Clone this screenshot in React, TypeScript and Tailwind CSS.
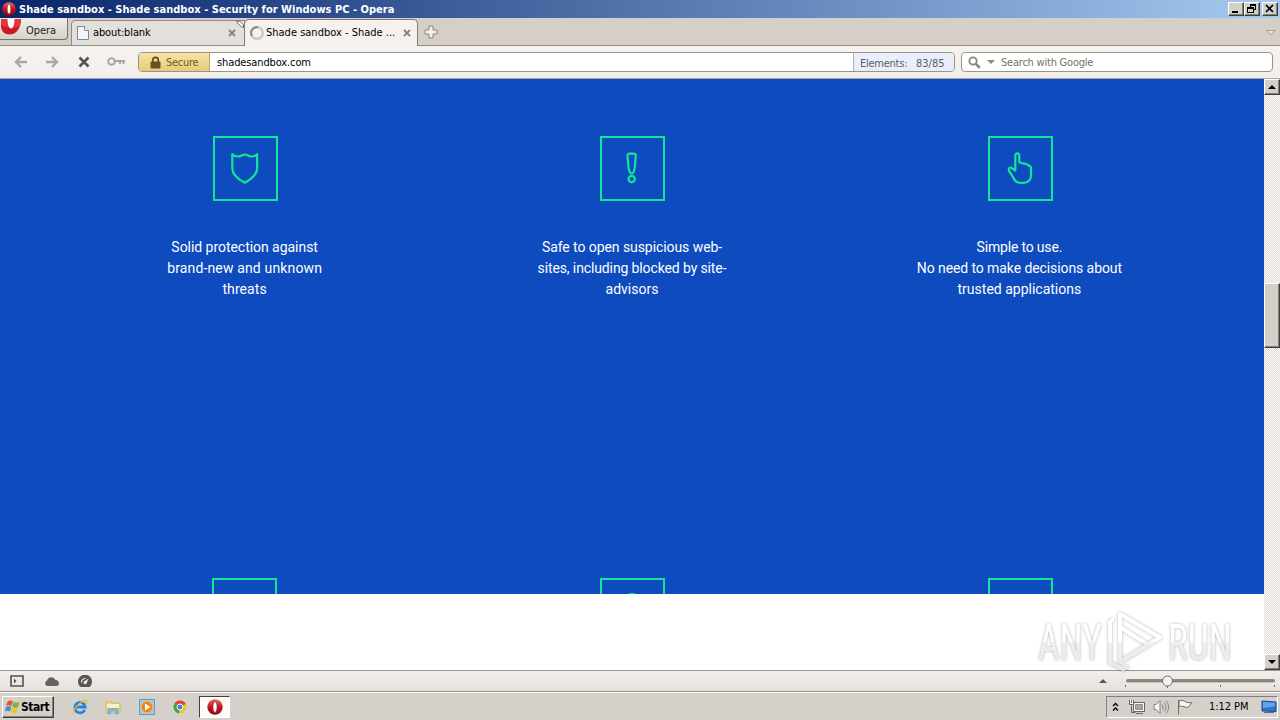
import type { ReactNode } from "react";
import clsx from "clsx";

const uiFont = "font-['DejaVu_Sans_Condensed','DejaVu_Sans',sans-serif] font-stretch-condensed";

const bevel =
  "bg-[#d4d0c8] border border-t-white border-l-white border-r-[#404040] border-b-[#404040] shadow-[inset_-1px_-1px_0_#808080]";

function OperaLogo({ className }: { className?: string }) {
  return (
    <svg viewBox="0 0 16 16" className={className}>
      <defs>
        <linearGradient id="operaRed" x1="0" y1="0" x2="0" y2="1">
          <stop offset="0" stopColor="#ee6a62" />
          <stop offset="0.5" stopColor="#c8141c" />
          <stop offset="1" stopColor="#8e0810" />
        </linearGradient>
      </defs>
      <ellipse cx="8" cy="8" rx="7.7" ry="7.8" fill="url(#operaRed)" />
      <ellipse cx="8" cy="8" rx="2.1" ry="5.5" fill="#fff" stroke="#7c0910" strokeWidth="0.6" />
    </svg>
  );
}

function ShieldIcon() {
  return (
    <path d="M19.300 18.200c2.300 2.300 4.700 2.600 7.200 2.100 2.300-.4 3.300-1.800 5.300-1.800s3 1.400 5.300 1.800c2.500.5 4.900.2 7-2.100v14.300c0 6.500-5.500 10.500-12.300 14.300-7-3.800-12.500-7.800-12.500-14.300z" />
  );
}

function WarningIcon() {
  return (
    <>
      <path d="M29.500 17.700h4.400c1.300 0 2 .8 1.900 2l-1 11.500c-.3 2.500-1.200 6.300-3.100 6.300s-2.900-3.800-3.200-6.300l-1-11.500c-.1-1.200.7-2 2-2z" />
      <circle cx="31.700" cy="43" r="3.200" />
    </>
  );
}

function HandIcon() {
  return (
    <path d="M27.300 34.500V20c0-3.400 4-3.400 4 0v6.500c2 .2 3 .4 4.500 1.200 2.500.1 3.500.6 4.500 1.600 2 .2 2.700 1.300 2.700 3v7c0 4.500-3 7.500-7.500 7.500h-3.500c-3.800 0-5.500-2.300-6.800-5.300l-3.900-6.200c-1.500-3.500 1-4.500 3-2.800z" />
  );
}

function IconBox({ children }: { children?: ReactNode }) {
  return (
    <div className="h-[65px] w-[65px] shrink-0 border-2 border-[#12e696]">
      <svg viewBox="2 2 61 61" className="h-full w-full" fill="none" stroke="#12e696" strokeWidth="2.200" strokeLinejoin="round">
        {children}
      </svg>
    </div>
  );
}

const features = [
  {
    icon: <ShieldIcon />,
    lines: [
      { text: "Solid protection against", tracking: "tracking-[-0.04px]" },
      { text: "brand-new and unknown", tracking: "tracking-[0.15px]" },
      { text: "threats", tracking: "tracking-[0.1px]" },
    ],
  },
  {
    icon: <WarningIcon />,
    lines: [
      { text: "Safe to open suspicious web-", tracking: "tracking-[-0.07px]" },
      { text: "sites, including blocked by site-", tracking: "tracking-[-0.12px]" },
      { text: "advisors", tracking: "tracking-normal" },
    ],
  },
  {
    icon: <HandIcon />,
    lines: [
      { text: "Simple to use.", tracking: "tracking-[-0.18px]" },
      { text: "No need to make decisions about", tracking: "tracking-[-0.09px]" },
      { text: "trusted applications", tracking: "tracking-normal" },
    ],
  },
];

function TitleBar() {
  return (
    <header className="flex h-[18px] items-center bg-linear-to-r from-[#0a246a] to-[#a6caf0] pl-[2px] pr-[2px]">
      <OperaLogo className="h-[14px] w-[14px]" />
      <h1 className="ml-[3px] flex-1 whitespace-nowrap text-[11px] font-bold leading-none tracking-[0.020px] text-white">
        Shade sandbox - Shade sandbox - Security for Windows PC - Opera
      </h1>
      <div className="flex">
        <button className={clsx(bevel, "flex h-[14px] w-[16px] items-end pb-[2px] pl-[3px]")}>
          <span className="h-[2px] w-[6px] bg-black" />
        </button>
        <button className={clsx(bevel, "h-[14px] w-[16px]")}>
          <svg viewBox="0 0 14 12" className="h-[12px] w-[14px]" fill="none" stroke="#000" shapeRendering="crispEdges">
            <path d="M5.500 4V1.500h5v5H8.500M5 2.500h6M2.500 4.500h6v5h-6zM2 5.500h7" />
          </svg>
        </button>
        <button className={clsx(bevel, "ml-[2px] h-[14px] w-[16px]")}>
          <svg viewBox="0 0 14 12" className="h-[12px] w-[14px]" stroke="#000" strokeWidth="1.700">
            <path d="M3 2l7 7M10 2L3 9" />
          </svg>
        </button>
      </div>
    </header>
  );
}

function CloseX() {
  return (
    <svg viewBox="0 0 8 8" className="h-2 w-2 shrink-0" stroke="#87837d" strokeWidth="1.800">
      <path d="M1 1l6 6M7 1L1 7" />
    </svg>
  );
}

function TabBar() {
  return (
    <div className="flex h-[28px] items-start bg-[#d6cfc7] shadow-[inset_0_-1px_0_#908b83]">
      <div className="flex h-[22px] w-[68px] rounded-br-[4px] border border-l-0 border-t-0 border-[#77736d] bg-linear-to-b from-[#f1eeea] to-[#d5d1cb]">
        <svg viewBox="0 0 22 18" className="h-[18px] w-[22px]">
          <path d="M1 1h20c-.3 9-4 15-11 15.500C4 16.500 1.500 13 1 9z" fill="#cf1820" />
          <path d="M1 1h20c0 3-.6 5.500-1.500 7.500C15 10 5 10 1 7z" fill="#e0383a" />
          <path d="M7.500 1h7c0 5-1.200 9.500-3.500 9.500S7.500 6 7.500 1z" fill="#fff" />
        </svg>
        <span className="ml-[4px] mt-[5px] text-[11px] leading-[15px] tracking-[-0.05px] text-[#1b1b1b]">Opera</span>
      </div>
      <div className="ml-[3px] mt-[2px] flex h-[26px] w-[174px] items-center rounded-tl-[4px] border border-[#908b83] bg-[#e3dfda] pl-[5px] pr-[7px]">
        <svg viewBox="0 0 12 14" className="h-[14px] w-[12px]">
          <path d="M.5.5h7l4 4v9H.5z" fill="#f4f7fa" stroke="#7a8794" />
          <path d="M7.500.5v4h4" fill="#fff" stroke="#7a8794" />
        </svg>
        <span className="ml-[4px] flex-1 text-[11px] tracking-[-0.13px]">about:blank</span>
        <CloseX />
        <svg viewBox="0 0 8 8" className="-mr-[7px] -mt-[18px] h-2 w-2 shrink-0">
          <path d="M.5 1h3l4 4v2.500C5 7 2 4 .5 1z" fill="#fff" stroke="#6a6763" />
        </svg>
      </div>
      <div className="-ml-px mt-[1px] flex h-[27px] w-[174px] items-center rounded-t-[5px] border border-b-0 border-[#807b74] bg-[#f5f2ee] pl-[4px] pr-[6px]">
        <svg viewBox="0 0 16 16" className="h-[16px] w-[16px]" fill="none" strokeWidth="2.200">
          <circle cx="8" cy="8" r="5.800" stroke="#cac7c3" />
          <path d="M3 11A5.800 5.800 0 0 1 9 2.200" stroke="#918e8a" />
        </svg>
        <span className="ml-[1px] flex-1 whitespace-nowrap text-[11px] tracking-[0px]">Shade sandbox - Shade ...</span>
        <CloseX />
      </div>
      <svg viewBox="0 0 14 14" className="ml-[6px] mt-[7px] h-[14px] w-[14px]">
        <path d="M5 1h4v4h4v4H9v4H5V9H1V5h4z" fill="#f4f1ed" stroke="#8b867f" />
      </svg>
      <svg viewBox="0 0 12 8" className="ml-auto mr-[3px] mt-[11px] h-[8px] w-[12px]">
        <path d="M1.500 1.500h9L6 5.500z" fill="#e9e5df" stroke="#a8a29a" />
      </svg>
    </div>
  );
}

function Arrow({ flip }: { flip?: boolean }) {
  return (
    <svg viewBox="0 0 14 12" className={clsx("h-[12px] w-[14px]", flip && "-scale-x-100")} fill="none" stroke="#aaa6a1" strokeWidth="2.300">
      <path d="M13 6H2M7 1L2 6l5 5" />
    </svg>
  );
}

function AddressBar() {
  return (
    <div className="flex h-[33px] items-center border-b border-[#aaa69f] bg-linear-to-b from-[#f6f3ef] to-[#f3efea] pl-[14px] pr-[7px]">
      <Arrow />
      <div className="ml-[17px]">
        <Arrow flip />
      </div>
      <svg viewBox="0 0 12 12" className="ml-[19px] h-[12px] w-[12px]" stroke="#55524f" strokeWidth="2.600">
        <path d="M1.500 1.500l9 9M10.500 1.500l-9 9" />
      </svg>
      <svg viewBox="0 0 19 10" className="ml-[17px] h-[10px] w-[19px]" fill="none" stroke="#aaa6a1" strokeWidth="2">
        <circle cx="4.500" cy="4.500" r="3.300" />
        <path d="M8 4h10M13 4v3M16.500 4v3" />
      </svg>
      <div className="ml-[12px] flex h-[20px] w-[817px] overflow-hidden rounded-[4px] border border-[#98938b] bg-white text-[11px] leading-[19px]">
        <div className="flex w-[71px] items-center border-r border-[#b9a368] bg-linear-to-b from-[#f5e3a6] to-[#e9cb77] pl-[11px] text-[#6b5b33]">
          <svg viewBox="0 0 11 13" className="h-[13px] w-[11px]">
            <path d="M2.800 6V4a2.700 2.700 0 0 1 5.400 0v2" fill="none" stroke="#5d4d1f" strokeWidth="1.700" />
            <rect x="0.500" y="5.500" width="10" height="7" rx="1" fill="#66531f" />
          </svg>
          <span className="ml-[5px] pt-px tracking-[-0.3px]">Secure</span>
        </div>
        <span className="ml-[7px] flex-1 tracking-[-0.12px]">shadesandbox.com</span>
        <div className="flex w-[101px] border-l border-[#aeb2c0] bg-[#e9eefa] pl-[6px] text-[#5a5e6a]">
          <span className="w-[56px] leading-[21px] tracking-[-0.25px]">Elements:</span>
          <span className="leading-[21px]">83/85</span>
        </div>
      </div>
      <div className="ml-[6px] flex h-[20px] flex-1 items-center rounded-[4px] border border-[#98938b] bg-white pl-[6px]">
        <svg viewBox="0 0 13 13" className="h-[13px] w-[13px]" fill="none" stroke="#8a8683">
          <circle cx="5" cy="5" r="3.700" strokeWidth="1.800" />
          <path d="M7.800 7.800l4 4" strokeWidth="2.600" />
        </svg>
        <svg viewBox="0 0 8 4" className="ml-[6px] h-[4px] w-[8px]">
          <path d="M0 0h8L4 4z" fill="#8a8683" />
        </svg>
        <span className="ml-[6px] pt-px text-[11px] leading-[20px] tracking-[-0.22px] text-[#75716d]">Search with Google</span>
      </div>
    </div>
  );
}

function ScrollBar() {
  return (
    <div className="flex w-4 flex-col items-stretch bg-[repeating-conic-gradient(#ffffff_0_25%,#dedad3_0_50%)] bg-[length:2px_2px]">
      <div className={clsx(bevel, "flex h-4 items-center justify-center")}>
        <svg viewBox="0 0 8 4" className="h-[4px] w-[8px]"><path d="M0 4h8L4 0z" /></svg>
      </div>
      <div className={clsx(bevel, "mt-[188px] h-[65px]")} />
      <div className={clsx(bevel, "mt-auto flex h-4 items-center justify-center")}>
        <svg viewBox="0 0 8 4" className="h-[4px] w-[8px]"><path d="M0 0h8L4 4z" /></svg>
      </div>
    </div>
  );
}

function Watermark() {
  return (
    <svg
      viewBox="0 0 226 76"
      className="pointer-events-none absolute bottom-[-10px] right-[2px] h-[76px] w-[226px] drop-shadow-[0_0_1.5px_rgba(0,0,0,0.3)]"
    >
      <defs>
        <linearGradient id="markFade" gradientUnits="userSpaceOnUse" x1="0" y1="0" x2="0" y2="70">
          <stop offset="0.530" stopColor="#ffffff" />
          <stop offset="0.560" stopColor="#efefef" />
          <stop offset="1" stopColor="#e8e8e8" />
        </linearGradient>
      </defs>
      <g fill="url(#markFade)" fontFamily="Roboto, sans-serif" fontSize="50">
        <text x="2" y="56" textLength="64" lengthAdjust="spacingAndGlyphs">ANY</text>
        <text x="132" y="56" textLength="64" lengthAdjust="spacingAndGlyphs">RUN</text>
      </g>
      <g fill="none" stroke="url(#markFade)" strokeWidth="4" strokeLinejoin="round">
        <path d="M84 10v48l40-24.500z" />
        <path d="M84 9v14l30 19M78 15l-4 3v41l13 6 5-3M84 58l34-21" strokeWidth="4" />
      </g>
    </svg>
  );
}

function Page() {
  return (
    <main className="relative flex flex-1 flex-col bg-white">
      <section className="h-[515px] overflow-hidden bg-[#0d4bbf] pl-[51.700px] pr-[50.200px] pt-[57px]">
        <div className="grid h-[442px] grid-cols-3">
          {features.map((feature, i) => (
            <div key={i} className="flex flex-col items-center">
              <IconBox>{feature.icon}</IconBox>
              <p className="mr-[1.500px] mt-[36px] whitespace-nowrap text-center font-[Roboto,sans-serif] text-[14px] leading-[21px] font-stretch-normal text-white">
                {feature.lines.map((line) => (
                  <span key={line.text} className={clsx("block", line.tracking)}>{line.text}</span>
                ))}
              </p>
            </div>
          ))}
        </div>
        <div className="grid grid-cols-3 justify-items-center [&>:first-child]:mr-px">
          <IconBox />
          <IconBox>
            <circle cx="32" cy="24" r="8" />
          </IconBox>
          <IconBox />
        </div>
      </section>
      <Watermark />
    </main>
  );
}

function StatusBar() {
  return (
    <div className="flex h-[22px] items-center border-b border-t border-[#9a958d] bg-linear-to-b from-[#f2eeea] to-[#e8e1db] pl-[10px] pr-[4px]">
      <svg viewBox="0 0 14 12" className="h-[12px] w-[14px]">
        <path d="M1 1h12v10H1z" fill="none" stroke="#55514e" strokeWidth="1.600" />
        <path d="M4 3.500v5L6.500 6z" fill="#55514e" />
      </svg>
      <svg viewBox="0 0 15 11" className="ml-[20px] h-[11px] w-[15px]" fill="#666260">
        <path d="M3 10a3 3 0 0 1 0-5.500A4.500 4.500 0 0 1 11.500 4c2 0 3.500 1.500 3.500 3.200S14 10 12.500 10z" />
      </svg>
      <svg viewBox="0 0 14 12" className="ml-[19px] h-[12px] w-[14px]">
        <path d="M2.500 12a7 7 0 1 1 9 0z" fill="#5b5754" />
        <path d="M3.500 7.500A3.700 3.700 0 0 1 7.500 3.500" fill="none" stroke="#f1ede9" strokeWidth="1.200" />
        <path d="M10.500 3.500L8.500 8.500A1.700 1.700 0 0 1 5.500 7z" fill="#f1ede9" />
      </svg>
      <svg viewBox="0 0 8 4" className="ml-auto mr-[18px] h-[4px] w-[8px]" fill="#5c5855">
        <path d="M0 4h8L4 0z" />
      </svg>
      <svg viewBox="0 0 151 16" className="h-[16px] w-[151px]">
        <rect x="1.500" y="6.500" width="148" height="2.500" rx="1" fill="#8d8882" stroke="#716c67" strokeWidth="0.600" />
        <path d="M.5 12v2M42.500 12v3M95.500 12v2M149.500 12v2" stroke="#6d6863" />
        <circle cx="42.500" cy="8" r="5" fill="#f6f3f0" stroke="#706b66" />
      </svg>
    </div>
  );
}

function Taskbar() {
  return (
    <footer className="flex h-[28px] items-center border-t border-white bg-[#d5d0c9] pl-[2px]">
      <button className={clsx(bevel, "flex h-[22px] w-[52px] items-center pl-[2px]")}>
        <svg viewBox="0 0 15 15" className="h-[15px] w-[15px]">
          <path d="M2.500 2.500c2-1.300 3.700-1.200 5.300-.2L6.500 7C5 6 3 6 1.300 7z" fill="#e8542a" />
          <path d="M8.500 2.800c2 1.200 3.700 1.200 6 .2l-1.500 5c-2 1-4 .8-5.700-.3z" fill="#79b43c" />
          <path d="M1 8c2-1 3.700-1 5.200 0L5 12.500c-1.700-1-3.300-1-5 0z" fill="#4a88d8" />
          <path d="M7 8.500c2 1.200 3.700 1.200 5.700.3l-1.300 4.700c-2 1-4 .8-5.700-.3z" fill="#f4c02c" />
        </svg>
        <span className="ml-px whitespace-nowrap text-[12px] font-bold leading-none tracking-[-0.500px]">Start</span>
      </button>
      <svg viewBox="0 0 16 16" className="ml-[18px] h-[16px] w-[16px]" fill="none">
        <path d="M12.800 10.800A5.200 5.200 0 1 1 13.200 8H4" stroke="#2484df" strokeWidth="2.800" />
        <path d="M2 14.500C-1 12 9 1 14.500 1.500c1 1-.5 3-1 4" stroke="#edb92e" strokeWidth="1.300" />
      </svg>
      <svg viewBox="0 0 16 16" className="ml-[17px] h-[16px] w-[16px]">
        <path d="M1 2.500h5l1 1.500h8v10H1z" fill="#ecd580" stroke="#d1ae4e" strokeWidth="0.700" />
        <path d="M2 5h12v4H2z" fill="#faf1bf" />
        <path d="M3 15V9.500h10V15h-2.500v-3h-5v3z" fill="#78bce5" stroke="#4c9bca" strokeWidth="0.500" />
      </svg>
      <svg viewBox="0 0 16 16" className="ml-[18px] h-[16px] w-[16px]">
        <rect x="0.500" y="0.500" width="15" height="15" fill="#a5caeb" stroke="#5a9bd4" />
        <circle cx="8" cy="8" r="5.800" fill="#f08516" stroke="#f7b35d" />
        <path d="M6 4.500v7L11.500 8z" fill="#fff" />
      </svg>
      <svg viewBox="0 0 16 16" className="ml-[17px] h-[16px] w-[16px]">
        <circle cx="8" cy="8" r="6.500" fill="#ebc62b" />
        <path d="M8 8L2.300 4.800A6.500 6.500 0 0 1 13.800 5z" fill="#df4334" />
        <path d="M8 8L2.300 4.800A6.500 6.500 0 0 0 7 14.400z" fill="#37a452" />
        <circle cx="8" cy="8" r="3" fill="#3c82e5" stroke="#fff" />
      </svg>
      <div className="ml-[11px] flex h-[22px] w-[31px] items-center justify-center border border-b-white border-l-[#404040] border-r-white border-t-[#404040] bg-[#fdfcfb]">
        <OperaLogo className="h-[16px] w-[16px]" />
      </div>
      <div className="ml-auto mr-[2px] flex h-[22px] w-[172px] items-center border border-b-white border-l-[#808080] border-r-white border-t-[#808080] pl-[5px]">
        <svg viewBox="0 0 7 10" className="h-[10px] w-[7px]" fill="none" stroke="#000" strokeWidth="1.300">
          <path d="M1 4l2.500-2.500L6 4M1 8.500L3.500 6 6 8.500" />
        </svg>
        <svg viewBox="0 0 16 16" className="ml-[10px] h-[16px] w-[16px]" stroke="#67635f">
          <path d="M4.500 3.500h11v9h-11z" fill="#fbfaf8" />
          <path d="M6.500 5.500h7v5h-7z" fill="#a9a7a3" stroke="#8f8c88" />
          <path d="M7 14.500h7M2.500 6.500v7h4" fill="none" />
          <path d="M.5 1v4.500h4V1M2.500 1v3" fill="#fff" />
        </svg>
        <svg viewBox="0 0 16 16" className="ml-[8px] h-[16px] w-[16px]" fill="none" stroke="#85817c">
          <path d="M1 5.500h2l4-4v13l-4-4H1z" fill="#f6f4f1" />
          <path d="M9 5.500c1.300 1.500 1.300 3.500 0 5M11 3.500c2.500 2.500 2.500 6.500 0 9M13 1.500c3.500 4 3.500 9 0 13" />
        </svg>
        <svg viewBox="0 0 16 16" className="ml-[8px] h-[16px] w-[16px]">
          <path d="M1.500 1v14.500M2 2c3-1.500 5 0 7.500 1.200 2 .8 3.500.8 5.500 0l-3 4.300c-4 2.200-6-1.500-10 0z" fill="#f9f7f4" stroke="#6f6b66" />
        </svg>
        <time className="ml-[16px] whitespace-nowrap pt-[2px] text-[11px] tracking-[-0.050px]">1:12 PM</time>
        <svg viewBox="0 0 16 14" className="ml-auto h-[14px] w-[16px]">
          <path d="M1 1l14 1v9.500L1 11z" fill="#2f74cd" stroke="#164a90" />
          <path d="M2 2l12 .800v3.500L2 8z" fill="#68a4e9" />
          <path d="M3 12.500h10" stroke="#4f6f95" />
        </svg>
      </div>
    </footer>
  );
}

export default function App() {
  return (
    <div className={clsx(uiFont, "flex h-[720px] w-[1280px] flex-col overflow-hidden text-black")}>
      <TitleBar />
      <TabBar />
      <AddressBar />
      <div className="flex h-[591px] bg-white">
        <Page />
        <ScrollBar />
      </div>
      <StatusBar />
      <Taskbar />
    </div>
  );
}
